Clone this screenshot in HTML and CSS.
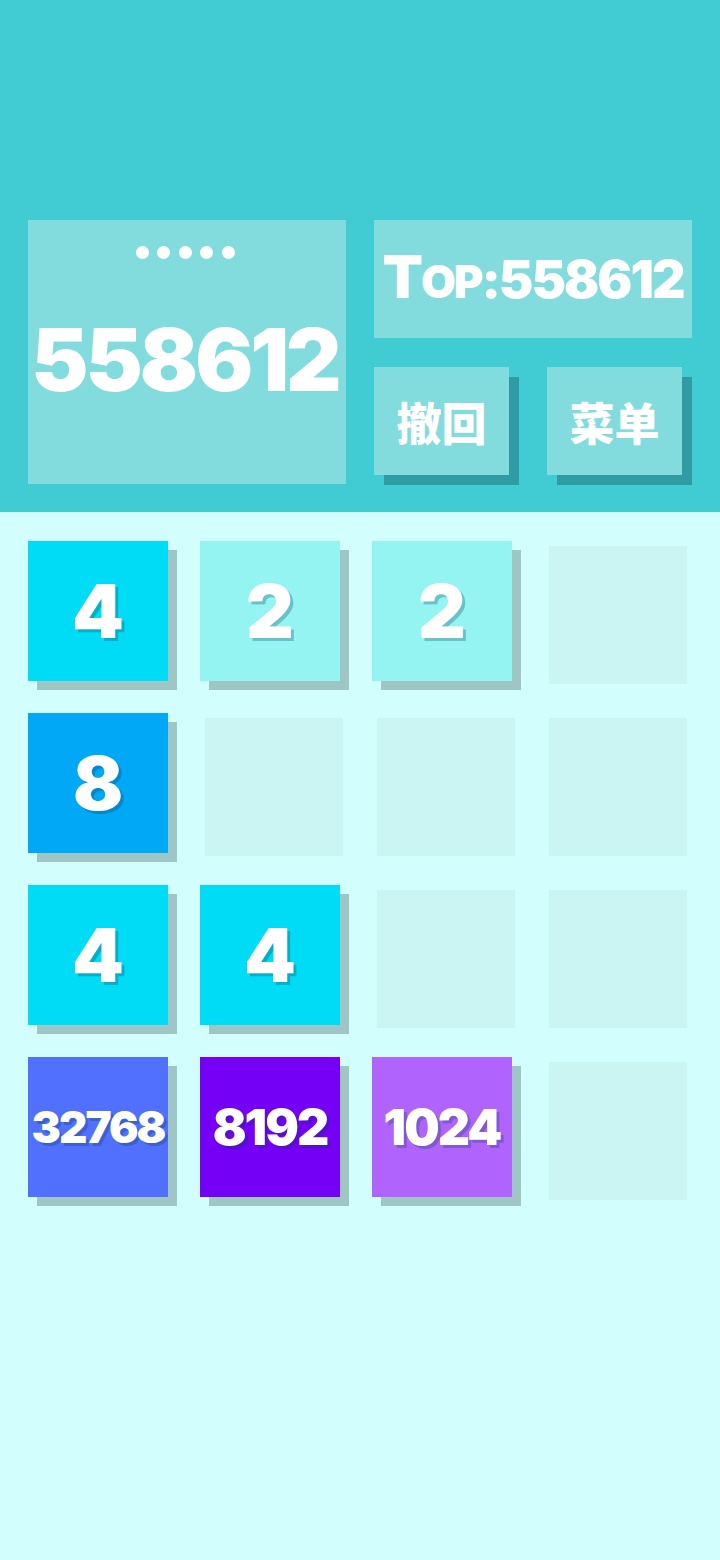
FILE: index.html
```html
<!DOCTYPE html>
<html lang="zh">
<head>
<meta charset="utf-8">
<link rel="stylesheet" href="styles.css">
</head>
<body>
<header class="header">
  <div class="score-box">
    <div class="dots"><span></span><span></span><span></span><span></span><span></span></div>
    <div class="score">558612</div>
  </div>
  <div class="side">
    <div class="top-box"><span class="cap">T</span><span class="sc">op</span>:558612</div>
    <div class="buttons">
      <div class="btn">撤回</div>
      <div class="btn">菜单</div>
    </div>
  </div>
</header>
<main class="board">
  <div class="tile t4">4</div>
  <div class="tile t2">2</div>
  <div class="tile t2">2</div>
  <div class="empty"></div>

  <div class="tile t8">8</div>
  <div class="empty"></div>
  <div class="empty"></div>
  <div class="empty"></div>

  <div class="tile t4">4</div>
  <div class="tile t4">4</div>
  <div class="empty"></div>
  <div class="empty"></div>

  <div class="tile t32768 small">32768</div>
  <div class="tile t8192 mid">8192</div>
  <div class="tile t1024 mid">1024</div>
  <div class="empty"></div>
</main>
</body>
</html>
```
FILE: styles.css
```css
html, body {
  margin: 0;
  padding: 0;
}
body {
  width: 720px;
  height: 1560px;
  background: #d2fffd;
  font-family: "Inter", "Noto Sans CJK SC", sans-serif;
  color: #ffffff;
  overflow: hidden;
}
.header {
  background: #41cbd3;
  height: 512px;
  box-sizing: border-box;
  padding: 220px 0 0 28px;
  display: flex;
  gap: 28px;
}
.score-box {
  width: 318px;
  height: 264px;
  background: #82dbdd;
  display: flex;
  flex-direction: column;
  align-items: center;
}
.dots {
  display: flex;
  gap: 8.5px;
  margin-top: 26px;
  margin-left: -4px;
}
.dots span {
  width: 13px;
  height: 13px;
  border-radius: 50%;
  background: #ffffff;
}
.score {
  font-weight: 900;
  font-size: 86px;
  line-height: 1;
  margin-top: 58px;
  letter-spacing: -3px;
  margin-left: -4px;
}
.side {
  width: 318px;
  display: flex;
  flex-direction: column;
  gap: 29px;
}
.top-box {
  height: 118px;
  background: #82dbdd;
  display: flex;
  align-items: baseline;
  justify-content: center;
  box-sizing: border-box;
  padding-top: 27px;
  font-weight: 900;
  font-size: 52px;
  line-height: 1;
  letter-spacing: -2px;
}
.top-box .cap {
  font-size: 59px;
}
.top-box .sc {
  font-size: 45px;
  text-transform: uppercase;
}
.buttons {
  display: flex;
  gap: 38px;
}
.btn {
  width: 135px;
  height: 108px;
  background: #82dbdd;
  box-shadow: 10px 10px 0 #2e9ca2;
  display: flex;
  align-items: center;
  justify-content: center;
  font-family: "Noto Sans CJK SC", sans-serif;
  font-weight: 900;
  font-size: 45px;
}
.board {
  display: grid;
  grid-template-columns: repeat(4, 140px);
  grid-auto-rows: 140px;
  gap: 32px;
  padding: 29px 0 0 28px;
}
.tile {
  display: flex;
  align-items: center;
  justify-content: center;
  box-shadow: 9px 9px 0 #a0c5c5;
  font-weight: 900;
  font-size: 74px;
  line-height: 1;
  text-shadow: 3px 3px 0 rgba(0, 60, 90, 0.28);
}
.tile.small {
  font-size: 44px;
  letter-spacing: -2px;
}
.tile.mid {
  font-size: 50px;
  letter-spacing: -2px;
}
.empty {
  width: 138px;
  height: 138px;
  margin: 5px 0 0 5px;
  background: #caf5f3;
}
.t2 { background: #94f4f2; }
.t4 { background: #00dcf5; }
.t8 { background: #00a8f5; }
.t1024 { background: #b064fd; }
.t8192 { background: #7500f6; }
.t32768 { background: #5270fe; }
```
